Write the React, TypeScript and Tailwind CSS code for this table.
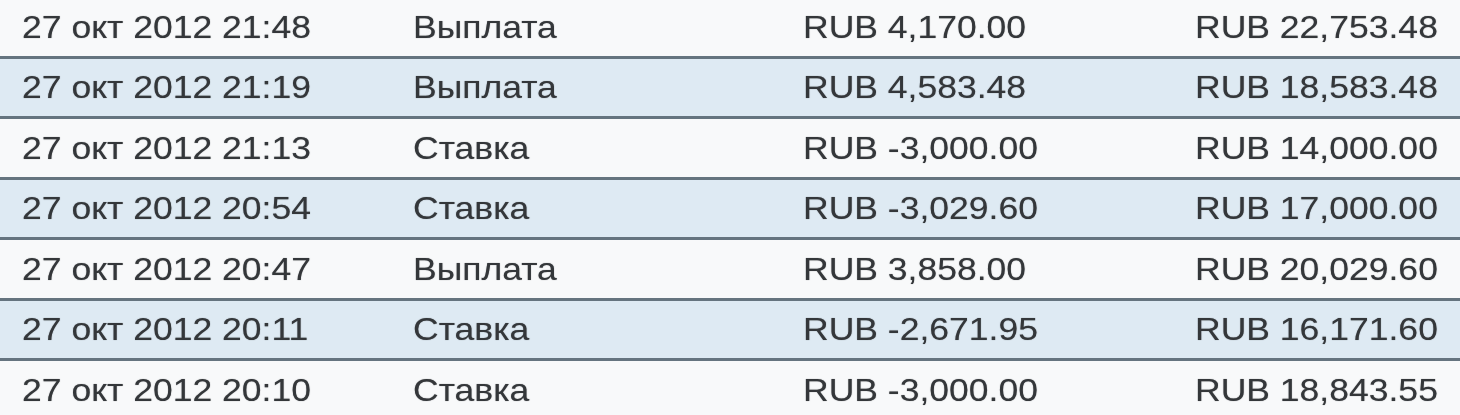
import React from 'react';

interface Entry {
  date: string;
  kind: string;
  amount: string;
  balance: string;
}

const entries: Entry[] = [
  { date: '27 окт 2012 21:48', kind: 'Выплата', amount: 'RUB 4,170.00', balance: 'RUB 22,753.48' },
  { date: '27 окт 2012 21:19', kind: 'Выплата', amount: 'RUB 4,583.48', balance: 'RUB 18,583.48' },
  { date: '27 окт 2012 21:13', kind: 'Ставка', amount: 'RUB -3,000.00', balance: 'RUB 14,000.00' },
  { date: '27 окт 2012 20:54', kind: 'Ставка', amount: 'RUB -3,029.60', balance: 'RUB 17,000.00' },
  { date: '27 окт 2012 20:47', kind: 'Выплата', amount: 'RUB 3,858.00', balance: 'RUB 20,029.60' },
  { date: '27 окт 2012 20:11', kind: 'Ставка', amount: 'RUB -2,671.95', balance: 'RUB 16,171.60' },
  { date: '27 окт 2012 20:10', kind: 'Ставка', amount: 'RUB -3,000.00', balance: 'RUB 18,843.55' },
];

function Cell({ children }: { children: React.ReactNode }) {
  return (
    <div className="flex items-center whitespace-nowrap">
      <span className="inline-block origin-left scale-x-[1.11]">{children}</span>
    </div>
  );
}

export default function App() {
  return (
    <div
      className="w-[1460px] h-[415px] overflow-hidden bg-[#f8f9fa] text-[32px] leading-none text-[#34373a] [text-shadow:0_0_1px_rgba(40,44,48,0.55)]"
      style={{ fontFamily: '"Liberation Sans", Arial, sans-serif' }}
    >
      <div className="-mt-[2px] blur-[0.4px]">
        {entries.map((e, i) => (
          <div
            key={i}
            className={`grid grid-cols-[391px_390px_392px_1fr] pl-[22px] h-[60.5px] border-b-[3px] border-[#65747f] ${
              i % 2 === 1 ? 'bg-[#deeaf3]' : 'bg-[#f8f9fa]'
            }`}
          >
            <Cell>{e.date}</Cell>
            <Cell>{e.kind}</Cell>
            <Cell>{e.amount}</Cell>
            <Cell>{e.balance}</Cell>
          </div>
        ))}
      </div>
    </div>
  );
}
